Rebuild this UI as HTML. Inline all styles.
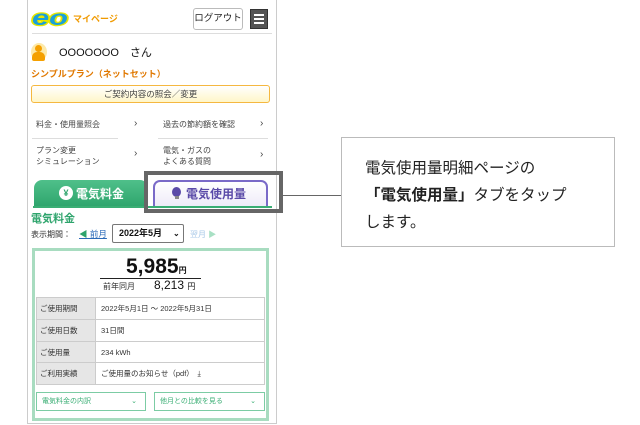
<!DOCTYPE html>
<html><head><meta charset="utf-8"><style>
*{margin:0;padding:0;box-sizing:border-box}
body{width:640px;height:425px;background:#fff;position:relative;overflow:hidden;font-family:"Liberation Sans","Noto Sans CJK JP",sans-serif;color:#333}
.a{position:absolute;white-space:nowrap}
.s{font-size:8px;color:#444}
</style></head><body>
<div class="a" style="left:27px;top:-2px;width:250px;height:426px;border:1px solid #ccc;border-top:none"></div>
<!-- header -->
<svg class="a" style="left:31px;top:7px" width="40" height="22"><text x="1" y="18" font-family="Liberation Sans" font-size="21" font-weight="bold" font-style="italic" fill="#1aa0d8" stroke="#e6e600" stroke-width="2.5" paint-order="stroke" textLength="36" lengthAdjust="spacingAndGlyphs">eo</text></svg>
<div class="a" style="left:73px;top:12px;font-size:9px;color:#f09a00;font-weight:bold">マイページ</div>
<div class="a" style="left:193px;top:8px;width:50px;height:22px;border:1px solid #bbb;border-radius:3px;font-size:9.5px;line-height:20px;text-align:center;color:#222">ログアウト</div>
<div class="a" style="left:250px;top:9px;width:18px;height:20px;background:#555;border:1px solid #333"></div>
<div class="a" style="left:254px;top:14px;width:10px;height:1.5px;background:#fff;box-shadow:0 4px 0 #fff,0 8px 0 #fff"></div>
<div class="a" style="left:32px;top:33px;width:240px;height:1px;background:#ddd"></div>
<div class="a" style="left:31px;top:43px;width:16px;height:18px;border-radius:50%;background:#fde9a8"></div>
<div class="a" style="left:35px;top:45px;width:7px;height:7px;border-radius:50%;background:#f5a000"></div>
<div class="a" style="left:32px;top:52px;width:13px;height:9px;border-radius:5px 5px 2px 2px;background:#f5a000"></div>
<div class="a" style="left:59px;top:44px;font-size:11px;color:#111">OOOOOOO　さん</div>
<div class="a" style="left:31px;top:67px;font-size:9px;color:#e07800;font-weight:bold">シンプルプラン（ネットセット）</div>
<div class="a" style="left:31px;top:85px;width:239px;height:18px;border:1px solid #f5b840;border-radius:3px;background:linear-gradient(#fff,#fff6c8);font-size:8.5px;line-height:16px;text-align:center;color:#444">ご契約内容の照会／変更</div>
<div class="a s" style="left:36px;top:119px">料金・使用量照会</div>
<div class="a s" style="left:134px;top:118px;font-size:10px">›</div>
<div class="a s" style="left:163px;top:119px">過去の節約額を確認</div>
<div class="a s" style="left:260px;top:118px;font-size:10px">›</div>
<div class="a" style="left:32px;top:138px;width:86px;height:1px;background:#ddd"></div>
<div class="a" style="left:158px;top:138px;width:110px;height:1px;background:#ddd"></div>
<div class="a s" style="left:36px;top:145px;line-height:11px">プラン変更<br>シミュレーション</div>
<div class="a s" style="left:134px;top:148px;font-size:10px">›</div>
<div class="a s" style="left:163px;top:145px;line-height:11px">電気・ガスの<br>よくある質問</div>
<div class="a s" style="left:260px;top:149px;font-size:10px">›</div>
<!-- tabs -->
<div class="a" style="left:34px;top:180px;width:114px;height:27px;background:linear-gradient(#4fc08a,#2ea46c);border-radius:8px 8px 0 0"></div>
<div class="a" style="left:59px;top:186px;width:14px;height:14px;border-radius:50%;background:#fff;color:#2ea46c;font-size:9px;font-weight:bold;text-align:center;line-height:14px">¥</div>
<div class="a" style="left:76px;top:185px;font-size:12px;font-weight:bold;color:#fff">電気料金</div>
<div class="a" style="left:153px;top:180px;width:115px;height:27px;border:2px solid #7a6ac8;border-bottom:none;border-radius:7px 7px 0 0;background:linear-gradient(#fff,#eeeaf8)"></div>
<div class="a" style="left:172px;top:187px;width:9px;height:10px;border-radius:50%;background:#5a4aa8"></div>
<div class="a" style="left:175px;top:196px;width:4px;height:3px;background:#888"></div>
<div class="a" style="left:186px;top:185px;font-size:12px;font-weight:bold;color:#5a4aa8">電気使用量</div>
<div class="a" style="left:33px;top:206px;width:239px;height:2px;background:#3aae74"></div>
<div class="a" style="left:144px;top:171px;width:139px;height:42px;border:4px solid #666"></div>
<div class="a" style="left:283px;top:195px;width:59px;height:1px;background:#666"></div>
<div class="a" style="left:341px;top:137px;width:274px;height:110px;border:1px solid #bbb"></div>
<div class="a" style="left:365px;top:155px;font-size:15.5px;line-height:27px;color:#222">電気使用量明細ページの<br><b>「電気使用量」</b>タブをタップ<br>します。</div>
<!-- charge -->
<div class="a" style="left:31px;top:210px;font-size:11px;font-weight:bold;color:#2ea46c">電気料金</div>
<div class="a" style="left:31px;top:229px;font-size:8px;color:#333">表示期間：</div>
<div class="a" style="left:79px;top:228px;font-size:8.5px;color:#2a6ab8;text-decoration:underline"><span style="color:#2ea46c;text-decoration:none">◀</span> 前月</div>
<div class="a" style="left:112px;top:224px;width:72px;height:19px;border:1px solid #777;border-radius:2px;font-size:9px;font-weight:bold;line-height:17px;padding-left:6px;color:#111">2022年5月 <span style="position:absolute;left:60px;font-size:8px">⌄</span></div>
<div class="a" style="left:190px;top:229px;font-size:8px;color:#a8c8e8">翌月 <span style="color:#a8e0c4">▶</span></div>
<div class="a" style="left:32px;top:248px;width:237px;height:173px;border:3px solid #a8dcc0"></div>
<div class="a" style="left:126px;top:255px;font-size:21px;font-weight:bold;color:#111">5,985<span style="font-size:8px">円</span></div>
<div class="a" style="left:100px;top:278px;width:101px;height:1px;background:#222"></div>
<div class="a" style="left:103px;top:281px;font-size:8px;color:#333">前年同月</div>
<div class="a" style="left:154px;top:278px;font-size:12px;color:#111">8,213 <span style="font-size:8px">円</span></div>
<table class="a" style="left:36px;top:297px;width:229px;border-collapse:collapse;font-size:7.5px;color:#333">
<tr style="height:22px"><td style="width:59px;background:#e6e6e6;border:1px solid #ccc;padding-left:3px">ご使用期間</td><td style="border:1px solid #ccc;padding-left:5px">2022年5月1日 ～ 2022年5月31日</td></tr>
<tr style="height:22px"><td style="background:#e6e6e6;border:1px solid #ccc;padding-left:3px">ご使用日数</td><td style="border:1px solid #ccc;padding-left:5px">31日間</td></tr>
<tr style="height:21px"><td style="background:#e6e6e6;border:1px solid #ccc;padding-left:3px">ご使用量</td><td style="border:1px solid #ccc;padding-left:5px">234 kWh</td></tr>
<tr style="height:22px"><td style="background:#e6e6e6;border:1px solid #ccc;padding-left:3px">ご利用実績</td><td style="border:1px solid #ccc;padding-left:5px">ご使用量のお知らせ（pdf）　⤓</td></tr>
</table>
<div class="a" style="left:36px;top:392px;width:110px;height:19px;border:1px solid #7ccca4;font-size:7px;line-height:17px;padding-left:5px;color:#3aae74">電気料金の内訳<span style="position:absolute;right:8px">⌄</span></div>
<div class="a" style="left:154px;top:392px;width:111px;height:19px;border:1px solid #7ccca4;font-size:7px;line-height:17px;padding-left:5px;color:#3aae74">他月との比較を見る<span style="position:absolute;right:8px">⌄</span></div>
</body></html>
